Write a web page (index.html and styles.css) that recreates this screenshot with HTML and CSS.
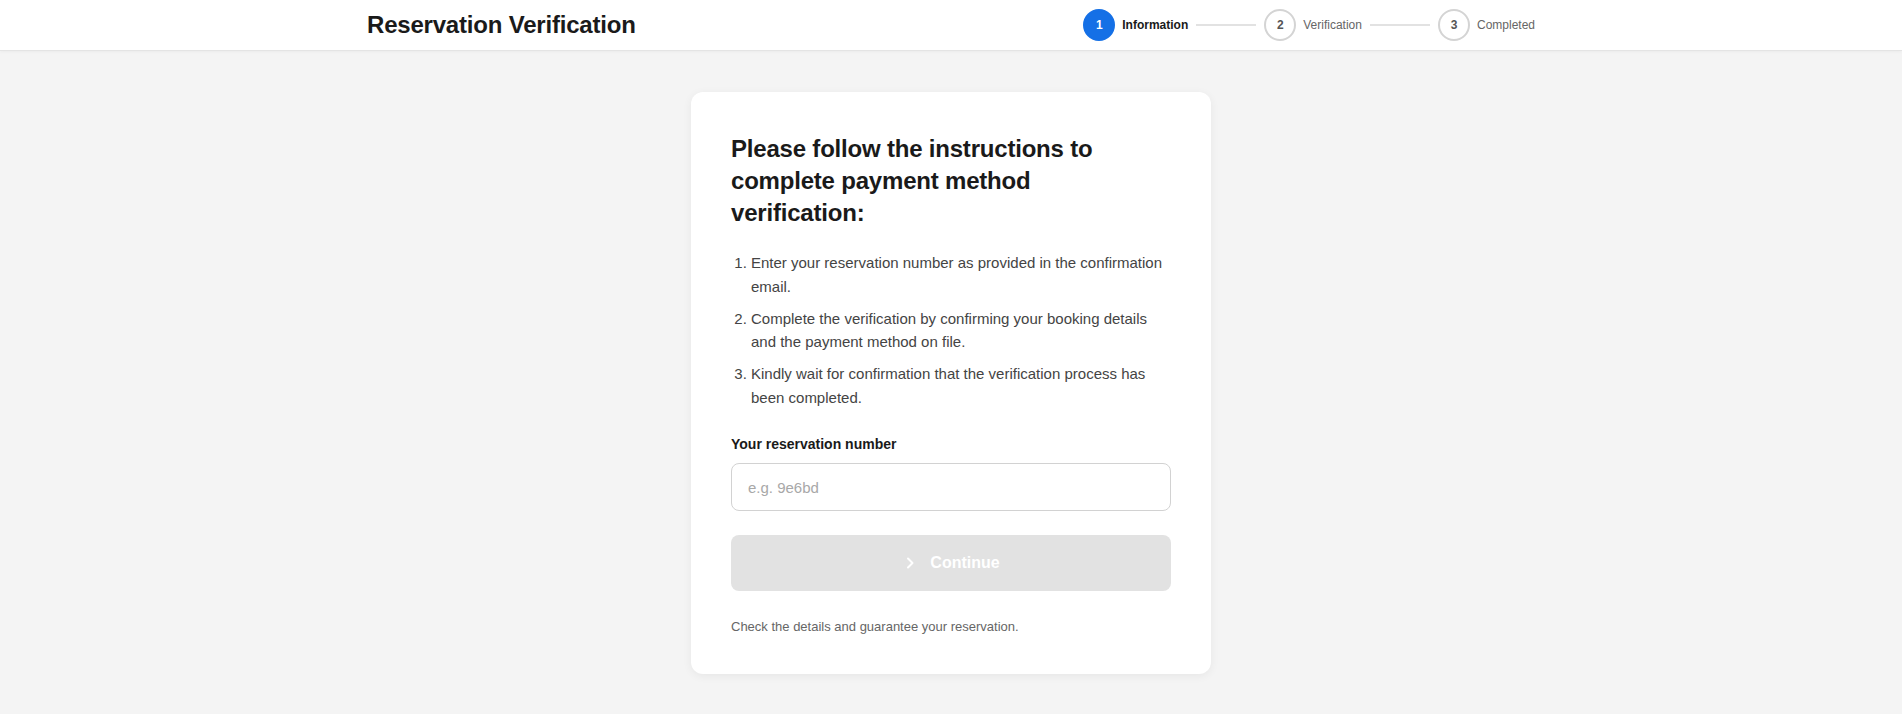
FILE: index.html
```html
<!DOCTYPE html>
<html lang="en">
<head>
<meta charset="utf-8">
<title>Reservation Verification</title>
<link rel="stylesheet" href="styles.css">
</head>
<body>
<header class="topbar">
  <div class="topbar-inner">
    <h1 class="brand">Reservation Verification</h1>
    <ol class="steps">
      <li class="step step-active"><span class="step-num">1</span><span class="step-label">Information</span></li>
      <li class="step-line"></li>
      <li class="step"><span class="step-num">2</span><span class="step-label">Verification</span></li>
      <li class="step-line"></li>
      <li class="step"><span class="step-num">3</span><span class="step-label">Completed</span></li>
    </ol>
  </div>
</header>
<main class="page">
  <section class="card">
    <h2 class="card-title">Please follow the instructions to complete payment method verification:</h2>
    <ol class="instructions">
      <li>Enter your reservation number as provided in the confirmation email.</li>
      <li>Complete the verification by confirming your booking details and the payment method on file.</li>
      <li>Kindly wait for confirmation that the verification process has been completed.</li>
    </ol>
    <label class="field-label" for="resnum">Your reservation number</label>
    <input class="field-input" id="resnum" type="text" placeholder="e.g. 9e6bd">
    <button class="btn-continue" type="button" disabled>
      <svg class="btn-icon" width="16" height="16" viewBox="0 0 16 16" aria-hidden="true"><path d="M6 3.5 10.5 8 6 12.5" fill="none" stroke="currentColor" stroke-width="2" stroke-linecap="round" stroke-linejoin="round"/></svg>
      <span>Continue</span>
    </button>
    <p class="card-note">Check the details and guarantee your reservation.</p>
  </section>
</main>
</body>
</html>
```
FILE: styles.css
```css
* { box-sizing: border-box; }
html, body { margin: 0; padding: 0; }
body {
  background: #f4f4f4;
  font-family: "Liberation Sans", Arial, sans-serif;
  color: #1a1a1a;
  min-height: 714px;
}
.topbar {
  background: #ffffff;
  height: 51px;
  border-bottom: 1px solid #e4e4e4;
  box-shadow: 0 1px 3px rgba(0,0,0,0.04);
}
.topbar-inner {
  max-width: 1200px;
  height: 50px;
  margin: 0 auto;
  padding: 0 16px;
  display: flex;
  align-items: center;
  justify-content: space-between;
}
.brand {
  margin: 0;
  font-size: 24px;
  font-weight: 700;
  color: #1a1a1a;
  line-height: 32px;
  letter-spacing: -0.2px;
}
.steps {
  list-style: none;
  margin: 0;
  padding: 0;
  display: flex;
  align-items: center;
  gap: 7px;
}
.step {
  display: flex;
  align-items: center;
  gap: 7px;
}
.step-num {
  width: 32px;
  height: 32px;
  border-radius: 50%;
  border: 2px solid #d4d4d4;
  display: flex;
  align-items: center;
  justify-content: center;
  font-size: 12px;
  font-weight: 700;
  color: #555;
}
.step-label {
  font-size: 12px;
  color: #666;
}
.step-active .step-num {
  background: #1570e6;
  border-color: #1570e6;
  color: #fff;
}
.step-active .step-label {
  color: #1a1a1a;
  font-weight: 700;
}
.step-line {
  width: 60px;
  height: 2px;
  background: #e2e2e2;
  margin: 0 1px;
}
.page {
  display: flex;
  justify-content: center;
  padding: 41px 16px 40px;
}
.card {
  width: 520px;
  background: #fff;
  border-radius: 12px;
  box-shadow: 0 2px 10px rgba(0,0,0,0.06);
  padding: 41px 40px 37px;
  display: flex;
  flex-direction: column;
}
.card-title {
  margin: 0;
  max-width: 420px;
  font-size: 24px;
  line-height: 32px;
  font-weight: 700;
  color: #1a1a1a;
  letter-spacing: -0.2px;
}
.instructions {
  margin: 22px 0 0;
  padding-left: 20px;
  font-size: 15px;
  line-height: 23.5px;
  color: #444;
}
.instructions li { margin-bottom: 8.5px; }
.instructions li:last-child { margin-bottom: 0; }
.field-label {
  margin-top: 25px;
  font-size: 14px;
  line-height: 20px;
  font-weight: 700;
  color: #1a1a1a;
}
.field-input {
  margin-top: 9px;
  height: 48px;
  border: 1px solid #d2d2d2;
  border-radius: 8px;
  padding: 0 16px;
  font-family: inherit;
  font-size: 15px;
  color: #222;
  background: #fff;
  outline: none;
}
.field-input::placeholder { color: #a8a8a8; }
.btn-continue {
  margin-top: 24px;
  height: 56px;
  border: none;
  border-radius: 8px;
  background: #e2e2e2;
  color: #fff;
  font-family: inherit;
  font-size: 16px;
  font-weight: 700;
  display: flex;
  align-items: center;
  justify-content: center;
  gap: 12px;
  cursor: not-allowed;
}
.btn-icon { display: block; }
.card-note {
  margin: 26px 0 0;
  font-size: 13px;
  line-height: 20px;
  color: #666;
}
```
